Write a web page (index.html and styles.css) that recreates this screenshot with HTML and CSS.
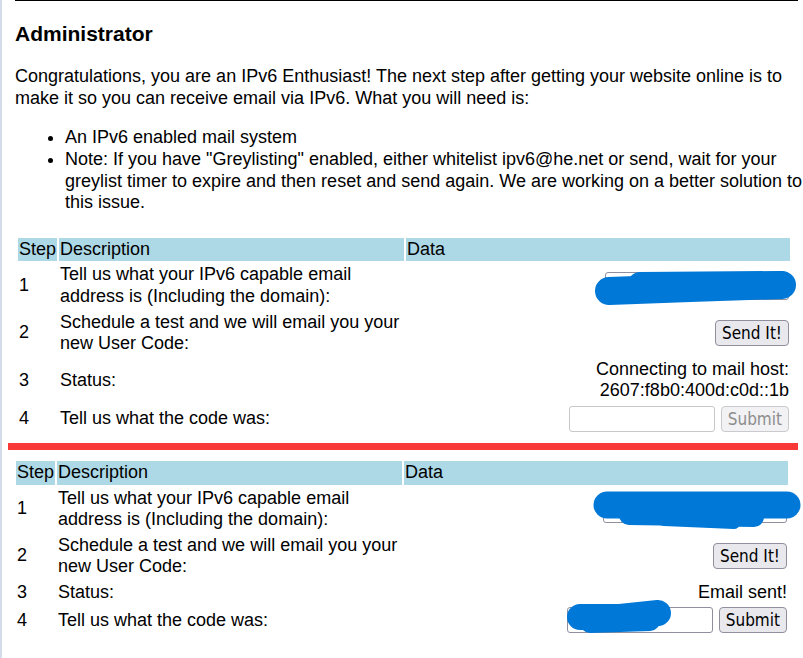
FILE: index.html
```html
<!DOCTYPE html>
<html lang="en">

<head>
    <meta charset="UTF-8">
    <meta name="viewport" content="width=device-width, initial-scale=1.0">
    <title>IPv6 Certification - Administrator</title>
    <link rel="stylesheet" href="styles.css">
</head>

<body>

    <div class="page">
        <div class="panel">
            <h3>Administrator</h3>
            <p>Congratulations, you are an IPv6 Enthusiast! The next step after getting your website online is to make it so you can receive email via IPv6. What you will need is:</p>
            <ul>
                <li>An IPv6 enabled mail system</li>
                <li>Note: If you have "Greylisting" enabled, either whitelist ipv6@he.net or send, wait for your greylist timer to expire and then reset and send again. We are working on a better solution to this issue.</li>
            </ul>

            <!-- Before sending -->
            <table class="steps steps-first">
                <tr>
                    <th class="col-step">Step</th>
                    <th class="col-desc">Description</th>
                    <th>Data</th>
                </tr>
                <tr>
                    <td>1</td>
                    <td>Tell us what your IPv6 capable email address is (Including the domain):</td>
                    <td class="data">
                        <input type="text" class="email-input">
                        <svg class="scribble" width="400" height="50">
                            <path d="M203 28 L284 25 L376 22" stroke-width="28" />
                            <path d="M234 21 L374 20" stroke-width="24" />
                        </svg>
                    </td>
                </tr>
                <tr>
                    <td>2</td>
                    <td>Schedule a test and we will email you your new User Code:</td>
                    <td class="data"><button class="button">Send It!</button></td>
                </tr>
                <tr>
                    <td>3</td>
                    <td>Status:</td>
                    <td class="data">Connecting to mail host:<br>2607:f8b0:400d:c0d::1b</td>
                </tr>
                <tr>
                    <td>4</td>
                    <td>Tell us what the code was:</td>
                    <td class="data">
                        <div class="code-row">
                            <input type="text" class="code-input" disabled>
                            <button class="button" disabled>Submit</button>
                        </div>
                    </td>
                </tr>
            </table>

            <div class="divider"></div>

            <!-- After sending -->
            <table class="steps steps-second">
                <tr>
                    <th class="col-step">Step</th>
                    <th class="col-desc">Description</th>
                    <th>Data</th>
                </tr>
                <tr>
                    <td>1</td>
                    <td>Tell us what your IPv6 capable email address is (Including the domain):</td>
                    <td class="data">
                        <input type="text" class="email-input">
                        <svg class="scribble" width="400" height="50">
                            <path d="M203 18 L383 18" stroke-width="27" />
                            <path d="M225 28 L350 30" stroke-width="20" />
                            <path d="M260 33 L330 36" stroke-width="12" />
                        </svg>
                    </td>
                </tr>
                <tr>
                    <td>2</td>
                    <td>Schedule a test and we will email you your new User Code:</td>
                    <td class="data"><button class="button">Send It!</button></td>
                </tr>
                <tr>
                    <td>3</td>
                    <td>Status:</td>
                    <td class="data">Email sent!</td>
                </tr>
                <tr>
                    <td>4</td>
                    <td>Tell us what the code was:</td>
                    <td class="data">
                        <div class="code-row">
                            <input type="text" class="code-input">
                            <button class="button">Submit</button>
                        </div>
                        <svg class="scribble" width="400" height="50">
                            <path d="M176 11 L216 11 L254 7" stroke-width="26" />
                            <path d="M186 17 L246 15" stroke-width="20" />
                        </svg>
                    </td>
                </tr>
            </table>
        </div>
    </div>

</body>

</html>
```

FILE: styles.css
```css
/* Basic Reset */
body,
h3,
p,
ul {
    margin: 0;
    padding: 0;
}

body {
    font-family: 'Liberation Sans', Arial, sans-serif;
    font-size: 18px;
    line-height: 1.2;
    color: #000;
    background: #fff;
}

.page {
    min-height: 100vh;
    border-left: 2px solid #d3dce8;
    padding: 0 5px 0 13px;
}

.panel {
    border-top: 1px solid #000;
}

h3 {
    font-size: 21px;
    margin: 20px 0;
}

p {
    margin: 16px 0;
}

ul {
    margin: 18px -10px 18px 0;
    padding-left: 50px;
}

/* Step tables */
.steps {
    width: 776px;
    table-layout: fixed;
    border-spacing: 2px;
}

.steps-first {
    margin: 22px 0 0 1px;
}

.steps-second {
    margin: 9px 0 0 -1px;
}

.steps th,
.steps td {
    padding: 1px;
    text-align: left;
    font-weight: normal;
}

.steps th {
    background-color: #add8e6;
}

.col-step {
    width: 37px;
}

.col-desc {
    width: 343px;
}

.steps td.data {
    text-align: right;
    position: relative;
}

.divider {
    height: 7px;
    margin: 8px 0 0 -7px;
    background-color: #f93838;
}

/* Form controls */
input {
    box-sizing: border-box;
    border: 1px solid #8f8f9d;
    border-radius: 3px;
    background: #fff;
    vertical-align: middle;
}

.email-input {
    width: 184px;
    height: 28px;
}

.code-input {
    width: 146px;
    height: 26px;
}

.code-input:disabled {
    border-color: #c8c8c8;
}

.code-row {
    display: flex;
    justify-content: flex-end;
    align-items: center;
    gap: 6px;
}

.button {
    box-sizing: border-box;
    height: 26px;
    padding: 0 6px;
    font-family: 'DejaVu Sans Condensed', 'DejaVu Sans', sans-serif;
    font-size: 17px;
    color: #000;
    background-color: #e9e9ed;
    border: 1px solid #8f8f9d;
    border-radius: 4px;
    vertical-align: middle;
}

.button:disabled {
    color: #8d8d8d;
    background-color: #f2f2f4;
    border-color: #cacace;
}

/* Redaction marks over the private fields */
.scribble {
    position: absolute;
    left: 0;
    top: 0;
    overflow: visible;
    pointer-events: none;
}

.scribble path {
    fill: none;
    stroke: #0078d7;
    stroke-linecap: round;
    stroke-linejoin: round;
}
```
